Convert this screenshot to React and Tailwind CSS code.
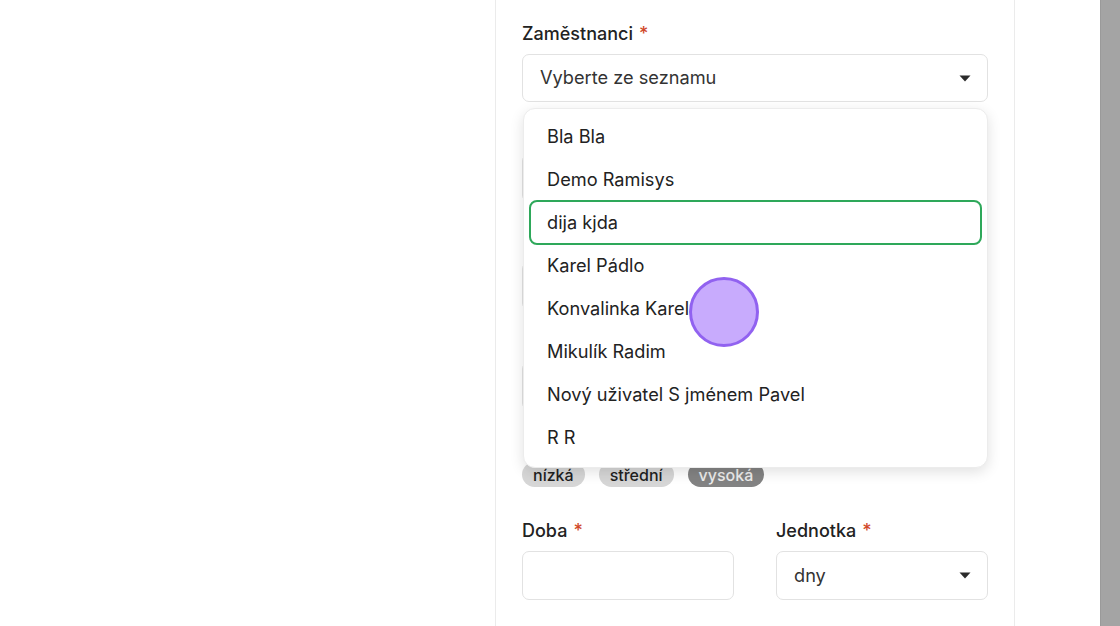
import React from "react";

const Caret = () => (
  <svg width="12" height="7" viewBox="0 0 12 7" className="shrink-0">
    <path d="M0.5 0.5 L11.5 0.5 L6 6.5 Z" fill="#2b2b2b" />
  </svg>
);

const Label = ({ children, className = "" }) => (
  <div className={"h-[24px] flex items-center text-[18px] font-medium text-[#222222] " + className}>
    {children}
    <span className="ml-[6px] text-[#d1492a]">*</span>
  </div>
);

const Spacer = ({ className = "" }) => <div className={"h-[24px] " + className} />;

const Input = ({ className = "", children }) => (
  <div className={"rounded-[7px] border border-[#e2e2e2] bg-white flex items-center " + className}>
    {children}
  </div>
);

const items = [
  "Bla Bla",
  "Demo Ramisys",
  "dija kjda",
  "Karel Pádlo",
  "Konvalinka Karel",
  "Mikulík Radim",
  "Nový uživatel S jménem Pavel",
  "R R",
];

export default function App() {
  return (
    <div
      className="relative w-[1120px] h-[626px] overflow-hidden bg-white flex"
      style={{ fontFamily: "Inter, 'Noto Sans', sans-serif" }}
    >
      <div className="w-[495px] shrink-0" />
      <div className="w-[520px] shrink-0 border-x border-[#ebebeb] px-[26px] pt-[21px]">
        <div className="relative">
          <Label>Zaměstnanci</Label>
          <Input className="mt-[9px] h-[48px] pl-[17px] pr-[16px] justify-between">
            <span className="text-[18.2px] text-[#333333]">Vyberte ze seznamu</span>
            <Caret />
          </Input>

          <Spacer className="mt-[20px]" />
          <Input className="mt-[8px] h-[48px]" />

          <Spacer className="mt-[20px]" />
          <Input className="mt-[16px] h-[48px]" />

          <Spacer className="mt-[20px]" />
          <Input className="mt-[8px] h-[48px]" />

          <Spacer className="mt-[20px]" />
          <div className="mt-[8px] flex gap-[14px]">
            <span className="h-[25px] px-[11px] rounded-full bg-[#d6d6d6] text-[16px] font-medium text-[#1f1f1f] flex items-center">nízká</span>
            <span className="h-[25px] px-[11px] rounded-full bg-[#d6d6d6] text-[16px] font-medium text-[#1f1f1f] flex items-center">střední</span>
            <span className="h-[25px] px-[11px] rounded-full bg-[#838383] text-[16px] font-medium text-[#ececec] flex items-center">vysoká</span>
          </div>

          <div className="mt-[31px] grid grid-cols-2 gap-x-[42px]">
            <div>
              <Label>Doba</Label>
              <Input className="mt-[9px] h-[49px]" />
            </div>
            <div>
              <Label>Jednotka</Label>
              <Input className="mt-[9px] h-[49px] pl-[17px] pr-[16px] justify-between">
                <span className="text-[18.2px] text-[#333333]">dny</span>
                <Caret />
              </Input>
            </div>
          </div>

          {/* dropdown overlay */}
          <div className="absolute left-[1px] right-0 top-[87px] rounded-[12px] border border-[#ececec] bg-white shadow-[0_4px_14px_rgba(0,0,0,0.12)] pt-[6px] pb-[8px]">
            {items.map((it, i) => (
              <div
                key={it}
                className={
                  "mx-[5px] h-[43px] rounded-[8px] border-2 pl-[16px] flex items-center text-[18.2px] text-[#222222] " +
                  (i === 2 ? "border-[#2ea85a] h-[45px] -my-[1px]" : "border-transparent")
                }
              >
                {it}
              </div>
            ))}
          </div>
        </div>
      </div>
      <div className="flex-1" />
      <div className="w-[20px] shrink-0 bg-[#a4a4a4] border-l border-[#9a9a9a]" />

      <div className="absolute left-[689px] top-[277px] w-[70px] h-[70px] rounded-full bg-[#c8abfd] border-[3px] border-[#9162f0]" />
    </div>
  );
}
